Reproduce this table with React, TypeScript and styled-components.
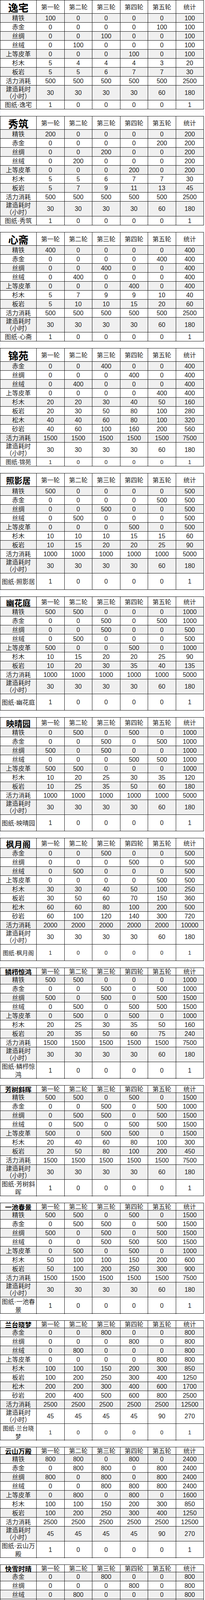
import styled, { createGlobalStyle } from "styled-components";

type Line = [string, number, number, number, number, number];

interface Building {
  name: string;
  headHeight: number;
  titleSize: number;
  planHeight: number;
  fine?: boolean;
  rows: Line[];
  hours: number[];
}

const HOURS_30 = [30, 30, 30, 30, 60];
const HOURS_45 = [45, 45, 45, 45, 90];

// 赤金 / 丝绸 / 丝绒 / 上等皮革 spread over rounds 3, 4, 2, 5
const fabric = (n: number): Line[] => [
  ["赤金", 0, 0, n, 0, 0],
  ["丝绸", 0, 0, 0, n, 0],
  ["丝绒", 0, n, 0, 0, 0],
  ["上等皮革", 0, 0, 0, 0, n],
];

// one material per round, starting with 精铁
const basic = (n: number): Line[] => [
  ["精铁", n, 0, 0, 0, 0],
  ["赤金", 0, 0, 0, 0, n],
  ["丝绸", 0, 0, n, 0, 0],
  ["丝绒", 0, n, 0, 0, 0],
  ["上等皮革", 0, 0, 0, n, 0],
];

const energy = (n: number): Line => ["活力消耗", n, n, n, n, n];

const buildings: Building[] = [
  {
    name: "逸宅",
    headHeight: 34,
    titleSize: 26,
    planHeight: 23,
    rows: [...basic(100), ["杉木", 5, 4, 4, 4, 3], ["板岩", 5, 5, 6, 7, 7], energy(500)],
    hours: HOURS_30,
  },
  {
    name: "秀筑",
    headHeight: 34,
    titleSize: 26,
    planHeight: 23,
    rows: [...basic(200), ["杉木", 5, 5, 6, 7, 7], ["板岩", 5, 7, 9, 11, 13], energy(500)],
    hours: HOURS_30,
  },
  {
    name: "心斋",
    headHeight: 34,
    titleSize: 26,
    planHeight: 23,
    rows: [...basic(400), ["杉木", 5, 7, 9, 9, 10], ["板岩", 5, 10, 10, 15, 20], energy(500)],
    hours: HOURS_30,
  },
  {
    name: "锦苑",
    headHeight: 34,
    titleSize: 26,
    planHeight: 23,
    fine: true,
    rows: [
      ...fabric(400),
      ["杉木", 20, 20, 30, 40, 50],
      ["板岩", 20, 30, 50, 80, 100],
      ["松木", 40, 40, 60, 80, 100],
      ["砂岩", 40, 60, 100, 160, 200],
      energy(1500),
    ],
    hours: HOURS_30,
  },
  {
    name: "照影居",
    headHeight: 34,
    titleSize: 21,
    planHeight: 42,
    rows: [...basic(500), ["杉木", 10, 10, 10, 15, 15], ["板岩", 10, 15, 20, 20, 25], energy(1000)],
    hours: HOURS_30,
  },
  {
    name: "幽花庭",
    headHeight: 27,
    titleSize: 21,
    planHeight: 42,
    rows: [
      ["精铁", 500, 500, 0, 0, 0],
      ["赤金", 0, 0, 500, 0, 500],
      ["丝绸", 0, 0, 500, 0, 0],
      ["丝绒", 0, 500, 0, 0, 0],
      ["上等皮革", 500, 0, 0, 500, 0],
      ["杉木", 10, 15, 20, 20, 25],
      ["板岩", 10, 20, 30, 35, 40],
      energy(1000),
    ],
    hours: HOURS_30,
  },
  {
    name: "映晴园",
    headHeight: 27,
    titleSize: 21,
    planHeight: 42,
    rows: [
      ["精铁", 0, 500, 0, 500, 0],
      ["赤金", 0, 0, 500, 0, 500],
      ["丝绸", 500, 0, 500, 0, 0],
      ["丝绒", 0, 0, 0, 500, 500],
      ["上等皮革", 500, 500, 0, 0, 0],
      ["杉木", 10, 20, 25, 30, 35],
      ["板岩", 10, 25, 35, 50, 60],
      energy(1000),
    ],
    hours: HOURS_30,
  },
  {
    name: "枫月阁",
    headHeight: 27,
    titleSize: 21,
    planHeight: 42,
    fine: true,
    rows: [
      ...fabric(500),
      ["杉木", 30, 30, 40, 50, 100],
      ["板岩", 30, 50, 60, 70, 150],
      ["松木", 60, 60, 80, 100, 200],
      ["砂岩", 60, 100, 120, 140, 300],
      energy(2000),
    ],
    hours: HOURS_30,
  },
  {
    name: "鳞栉惊鸿",
    headHeight: 19,
    titleSize: 17,
    planHeight: 42,
    rows: [
      ["精铁", 500, 500, 0, 0, 0],
      ["赤金", 0, 0, 500, 0, 500],
      ["丝绸", 500, 0, 500, 0, 500],
      ["丝绒", 0, 500, 0, 500, 500],
      ["上等皮革", 0, 500, 0, 500, 0],
      ["杉木", 20, 25, 30, 35, 50],
      ["板岩", 20, 35, 50, 60, 75],
      energy(1500),
    ],
    hours: HOURS_30,
  },
  {
    name: "芳树斜晖",
    headHeight: 19,
    titleSize: 17,
    planHeight: 42,
    rows: [
      ["精铁", 500, 500, 0, 500, 0],
      ["赤金", 0, 0, 500, 0, 500],
      ["丝绸", 0, 500, 500, 0, 500],
      ["丝绒", 0, 500, 0, 500, 500],
      ["上等皮革", 500, 0, 500, 500, 0],
      ["杉木", 20, 40, 60, 80, 100],
      ["板岩", 20, 50, 80, 100, 200],
      energy(1500),
    ],
    hours: HOURS_30,
  },
  {
    name: "一池春景",
    headHeight: 19,
    titleSize: 17,
    planHeight: 42,
    rows: [
      ["精铁", 500, 500, 0, 500, 0],
      ["赤金", 0, 500, 500, 0, 500],
      ["丝绸", 500, 0, 500, 0, 500],
      ["丝绒", 0, 0, 500, 500, 500],
      ["上等皮革", 0, 500, 0, 500, 0],
      ["杉木", 50, 100, 100, 150, 200],
      ["板岩", 50, 100, 200, 250, 300],
      energy(1500),
    ],
    hours: HOURS_30,
  },
  {
    name: "兰台晓梦",
    headHeight: 19,
    titleSize: 17,
    planHeight: 42,
    fine: true,
    rows: [
      ...fabric(800),
      ["杉木", 100, 100, 150, 200, 300],
      ["板岩", 100, 200, 250, 300, 400],
      ["松木", 200, 200, 300, 400, 600],
      ["砂岩", 200, 400, 500, 600, 800],
      energy(2500),
    ],
    hours: HOURS_45,
  },
  {
    name: "云山万殿",
    headHeight: 19,
    titleSize: 17,
    planHeight: 42,
    rows: [
      ["精铁", 800, 800, 0, 800, 0],
      ["赤金", 0, 800, 800, 0, 800],
      ["丝绸", 800, 0, 800, 0, 800],
      ["丝绒", 0, 0, 800, 800, 800],
      ["上等皮革", 0, 800, 0, 800, 0],
      ["杉木", 100, 100, 150, 200, 300],
      ["板岩", 100, 200, 250, 300, 400],
      energy(2500),
    ],
    hours: HOURS_45,
  },
  {
    name: "快雪时晴",
    headHeight: 19,
    titleSize: 17,
    planHeight: 42,
    fine: true,
    rows: [
      ...fabric(800),
      ["杉木", 100, 100, 150, 200, 300],
      ["板岩", 100, 200, 250, 300, 400],
      ["松木", 200, 200, 300, 400, 600],
      ["砂岩", 200, 400, 500, 600, 800],
      energy(2500),
    ],
    hours: HOURS_45,
  },
];

const ROUNDS = ["第一轮", "第二轮", "第三轮", "第四轮", "第五轮", "统计"];

const withTotal = (values: number[]) => [...values, values.reduce((a, b) => a + b, 0)];

export default function App() {
  return (
    <Page>
      <GlobalStyle />
      {buildings.map((b, i) => (
        <Block key={b.name}>
          {i > 0 && <Spacer />}
          <CostTable building={b} />
        </Block>
      ))}
    </Page>
  );
}

function CostTable({ building }: { building: Building }) {
  const compact = building.headHeight < 24;
  const hoursShaded = building.rows.length % 2 === 0;

  return (
    <Sheet>
      <Row $height={building.headHeight}>
        <Title $size={building.titleSize} $compact={compact}>
          {building.name}
        </Title>
        {ROUNDS.map((r) => (
          <HeadCell key={r} $compact={compact}>
            {r}
          </HeadCell>
        ))}
      </Row>

      {building.rows.map(([label, ...values], idx) => (
        <Row key={label} $height={23} $shaded={idx % 2 === 0}>
          <Label>{label}</Label>
          {withTotal(values).map((v, k) => (
            <Num key={k}>{v}</Num>
          ))}
        </Row>
      ))}

      <Row $height={38} $shaded={hoursShaded}>
        <Label>
          建造耗时
          <br />
          （小时）
        </Label>
        {withTotal(building.hours).map((v, k) => (
          <Num key={k}>{v}</Num>
        ))}
      </Row>

      <Row $height={building.planHeight}>
        <Label $fine={building.fine} $lineHeight={21}>
          图纸·{building.name}
        </Label>
        {withTotal([1, 0, 0, 0, 0]).map((v, k) => (
          <Num key={k} $fine={building.fine}>
            {v}
          </Num>
        ))}
      </Row>
    </Sheet>
  );
}

const GlobalStyle = createGlobalStyle`
  html, body {
    margin: 0;
    padding: 0;
    background: #ffffff;
  }
  body {
    font-family: "Liberation Sans", "Noto Sans CJK SC", sans-serif;
    color: #222222;
  }
`;

const Page = styled.div`
  width: 526px;
  display: flex;
  flex-direction: column;
`;

const Block = styled.div`
  display: flex;
  flex-direction: column;
`;

const Spacer = styled.div`
  width: 523px;
  height: 17px;
  box-sizing: border-box;
  border-left: 1px solid #e1e4ee;
  border-right: 1px solid #e1e4ee;
`;

const Sheet = styled.section`
  width: 523px;
  box-sizing: border-box;
  border-top: 1px solid #111111;
  border-left: 1px solid #111111;
  background: #ffffff;
`;

const Row = styled.div<{ $height: number; $shaded?: boolean }>`
  display: grid;
  grid-template-columns: 93px repeat(6, 1fr);
  height: ${(p) => p.$height}px;
  box-sizing: border-box;
  border-bottom: 1px solid #111111;
  background: ${(p) => (p.$shaded ? "#f0f0f0" : "#ffffff")};
`;

const Cell = styled.div`
  display: flex;
  align-items: center;
  justify-content: center;
  text-align: center;
  box-sizing: border-box;
  border-right: 1px solid #111111;
  font-size: 16px;
  line-height: 18px;
  padding-top: 1px;
`;

const HeadCell = styled(Cell)<{ $compact?: boolean }>`
  align-items: ${(p) => (p.$compact ? "flex-start" : "center")};
  padding-top: 2px;
  line-height: 16px;
  color: #262626;
`;

const Title = styled(Cell)<{ $size: number; $compact?: boolean }>`
  align-items: ${(p) => (p.$compact ? "flex-start" : "center")};
  padding-top: ${(p) => (p.$compact ? "1px" : "2px")};
  font-family: "Noto Sans CJK SC", sans-serif;
  font-weight: 700;
  font-size: ${(p) => p.$size}px;
  line-height: ${(p) => (p.$compact ? 17 : p.$size)}px;
  color: #000000;
`;

const Label = styled(Cell)<{ $fine?: boolean; $lineHeight?: number }>`
  font-size: ${(p) => (p.$fine ? "15px" : "16px")};
  line-height: ${(p) => p.$lineHeight ?? 18}px;
  font-feature-settings: "halt";
`;

const Num = styled(Cell)<{ $fine?: boolean }>`
  font-size: ${(p) => (p.$fine ? "14px" : "16px")};
`;
